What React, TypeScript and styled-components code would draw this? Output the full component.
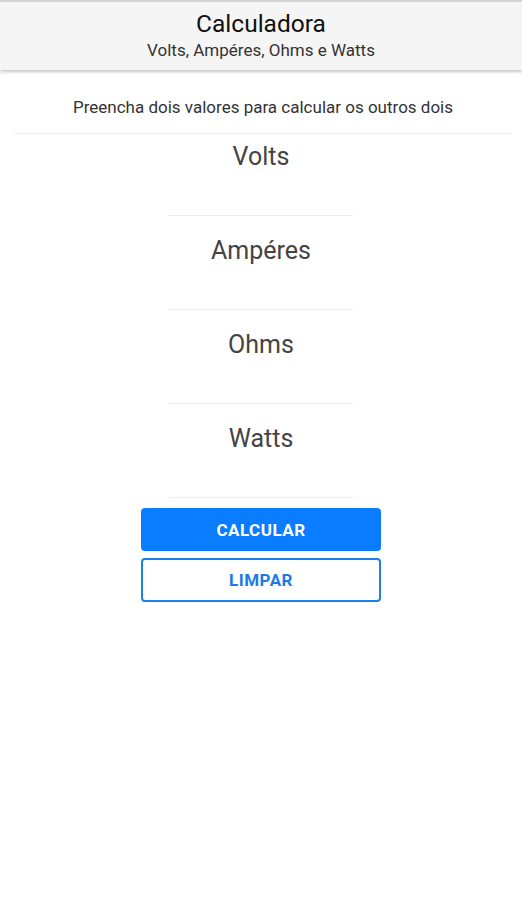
import React, { useState } from 'react'
import styled, { createGlobalStyle } from 'styled-components'

const GlobalStyle = createGlobalStyle`
  html, body {
    margin: 0;
    padding: 0;
    background: #ffffff;
    font-family: Roboto, 'Liberation Sans', sans-serif;
  }
`

const Page = styled.div`
  display: flex;
  flex-direction: column;
  min-height: 900px;
  background: #ffffff;
`

const Header = styled.header`
  display: flex;
  flex-direction: column;
  align-items: center;
  background: #f5f5f5;
  border-top: 2px solid #d4d4d4;
  padding: 8px 0 9px;
  box-shadow: 0 2px 3px rgba(0, 0, 0, 0.22);
`

const Title = styled.h1`
  margin: 0;
  font-size: 24.5px;
  font-weight: 400;
  line-height: 28px;
  color: #111;
`

const Subtitle = styled.div`
  margin-top: 1px;
  font-size: 17px;
  line-height: 22px;
  color: #333;
`

const Hint = styled.p`
  margin: 26px 10px 0 14px;
  padding-bottom: 15px;
  border-bottom: 1px solid #f0f0f0;
  text-align: center;
  font-size: 17px;
  line-height: 22px;
  color: #333;
`

const Form = styled.form`
  display: flex;
  flex-direction: column;
  align-items: center;
  gap: 12px;
`

const Field = styled.input`
  display: block;
  width: 184px;
  height: 82px;
  box-sizing: border-box;
  padding: 7px 0 44px;
  border: none;
  border-bottom: 1px solid #ececec;
  outline: none;
  background: transparent;
  font-family: Roboto, 'Liberation Sans', sans-serif;
  font-size: 25px;
  line-height: 30px;
  text-align: center;
  color: #333;

  &::placeholder {
    color: #444;
  }
`

const Actions = styled.div`
  display: flex;
  flex-direction: column;
  gap: 7px;
  margin-top: -2px;
`

const Button = styled.button<{ $outline?: boolean }>`
  width: 240px;
  height: ${p => (p.$outline ? '44px' : '43px')};
  box-sizing: border-box;
  border-radius: 4px;
  border: 2px solid ${p => (p.$outline ? '#1b80ec' : '#0a7cff')};
  background: ${p => (p.$outline ? '#ffffff' : '#0a7cff')};
  color: ${p => (p.$outline ? '#1b7be6' : '#ffffff')};
  font-family: Roboto, 'Liberation Sans', sans-serif;
  font-size: 17px;
  font-weight: 700;
  letter-spacing: 0.5px;
  cursor: pointer;
`

const fields = ['Volts', 'Ampéres', 'Ohms', 'Watts']

const App: React.FC = () => {
  const [values, setValues] = useState<Record<string, string>>({})

  const handleChange = (name: string, value: string) => {
    setValues(prev => ({ ...prev, [name]: value }))
  }

  return (
    <Page>
      <GlobalStyle />
      <Header>
        <Title>Calculadora</Title>
        <Subtitle>Volts, Ampéres, Ohms e Watts</Subtitle>
      </Header>
      <Hint>Preencha dois valores para calcular os outros dois</Hint>
      <Form onSubmit={e => e.preventDefault()}>
        {fields.map(f => (
          <Field
            key={f}
            placeholder={f}
            value={values[f] ?? ''}
            onChange={e => handleChange(f, e.target.value)}
          />
        ))}
        <Actions>
          <Button type="submit">CALCULAR</Button>
          <Button type="button" $outline onClick={() => setValues({})}>
            LIMPAR
          </Button>
        </Actions>
      </Form>
    </Page>
  )
}

export default App
